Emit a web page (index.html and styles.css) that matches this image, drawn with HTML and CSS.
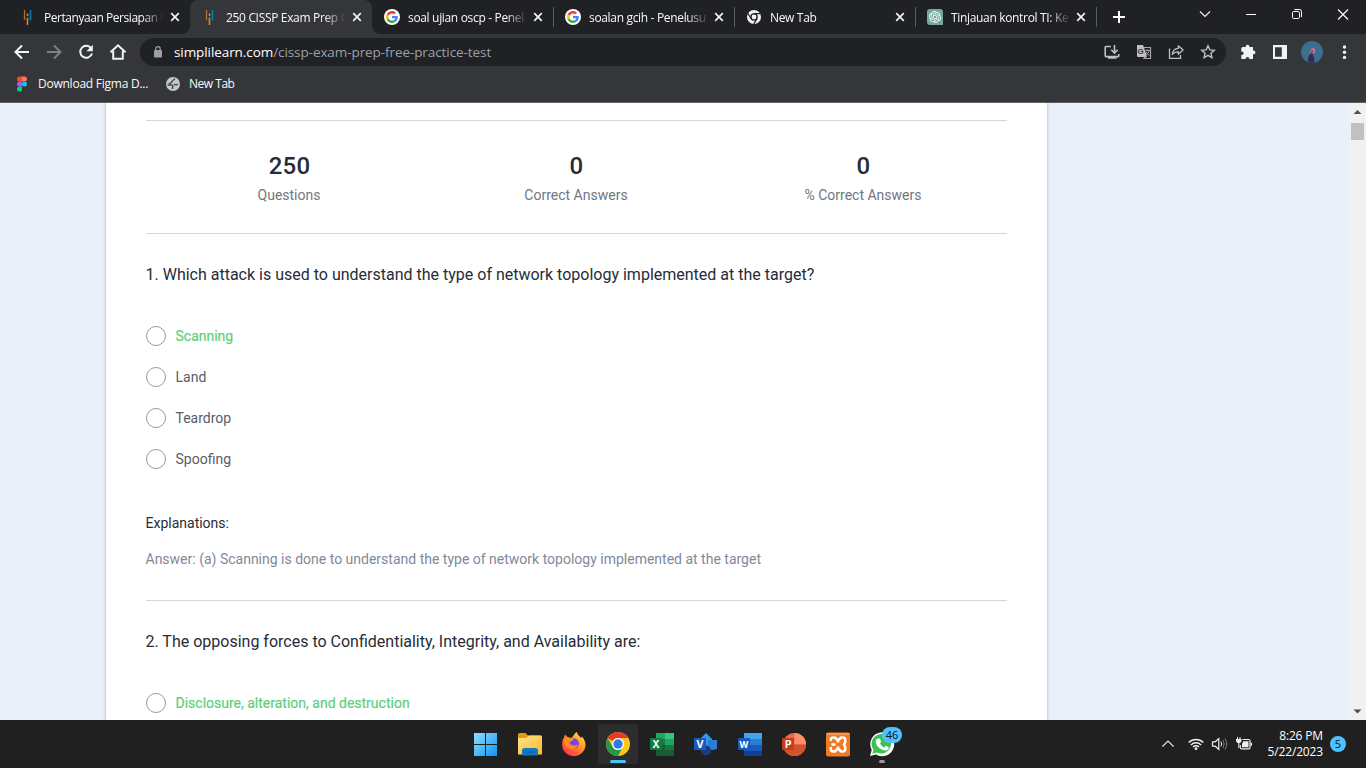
FILE: index.html
```html
<!DOCTYPE html>
<html lang="en">
<head>
<meta charset="utf-8">
<title>250 CISSP Exam Prep</title>
<link rel="stylesheet" href="styles.css">
</head>
<body>
<svg class="defs" width="0" height="0">
  <defs>
    <symbol id="x" viewBox="0 0 10 10"><path d="M1.2 1.2l7.6 7.6M8.800 1.200L1.200 8.800" stroke="#f1f3f4" stroke-width="1.7"/></symbol>
    <symbol id="sl" viewBox="0 0 16 16"><path d="M4.500 1v10" stroke="#a9742b" stroke-width="1.300"/><path d="M7.500 4.500v2.500M7.500 8.500v7.500" stroke="#c98b35" stroke-width="1.600"/><path d="M10.500 1v10.500" stroke="#0a7fa5" stroke-width="1.600"/></symbol>
    <symbol id="g" viewBox="0 0 72 72"><circle cx="36" cy="36" r="36" fill="#fff"/><g transform="translate(9 9) scale(1.125)"><path fill="#EA4335" d="M24 9.500c3.540 0 6.710 1.220 9.210 3.600l6.850-6.850C35.900 2.380 30.470 0 24 0 14.620 0 6.510 5.380 2.560 13.220l7.980 6.190C12.430 13.720 17.740 9.500 24 9.500z"/><path fill="#4285F4" d="M46.980 24.550c0-1.570-.15-3.090-.38-4.550H24v9.020h12.940c-.58 2.960-2.260 5.480-4.780 7.180l7.730 6c4.510-4.180 7.090-10.360 7.090-17.650z"/><path fill="#FBBC05" d="M10.530 28.590c-.48-1.450-.76-2.990-.76-4.590s.27-3.140.76-4.590l-7.980-6.190C.92 16.460 0 20.120 0 24c0 3.880.92 7.540 2.560 10.780z"/><path fill="#34A853" d="M24 48c6.480 0 11.930-2.130 15.890-5.810l-7.730-6c-2.150 1.450-4.920 2.300-8.160 2.300-6.260 0-11.570-4.220-13.470-9.910l-7.980 6.190C6.510 42.620 14.620 48 24 48z"/></g></symbol>
  </defs>
</svg>

<header class="browser">
  <div class="tabstrip">
    <div class="tab first"><svg class="fav"><use href="#sl"/></svg><span class="title">Pertanyaan Persiapan U</span><svg class="close"><use href="#x"/></svg></div>
    <div class="tab active"><svg class="fav"><use href="#sl"/></svg><span class="title">250 CISSP Exam Prep Q</span><svg class="close"><use href="#x"/></svg></div>
    <div class="tab sep"><svg class="fav"><use href="#g"/></svg><span class="title">soal ujian oscp - Penel</span><svg class="close"><use href="#x"/></svg></div>
    <div class="tab sep"><svg class="fav"><use href="#g"/></svg><span class="title">soalan gcih - Penelusu</span><svg class="close"><use href="#x"/></svg></div>
    <div class="tab sep"><svg class="fav" viewBox="0 0 16 16"><circle cx="8" cy="8" r="7" fill="#f1f3f4"/><circle cx="8" cy="8" r="3.100" fill="#f1f3f4" stroke="#202124" stroke-width="1.400"/><path d="M8 4.600h6.500M5 9.500L1.800 4.200M11 9.600l-3.200 5.300" stroke="#202124" stroke-width="1.200"/></svg><span class="title">New Tab</span><svg class="close"><use href="#x"/></svg></div>
    <div class="tab sep"><svg class="fav" viewBox="0 0 16 16"><path d="M3 0h10a3 3 0 0 1 3 3v13H3a3 3 0 0 1-3-3V3a3 3 0 0 1 3-3z" fill="#74aa9c"/><path transform="translate(2 2) scale(.5)" fill="#fff" d="M22.2819 9.8211a5.9847 5.9847 0 0 0-.5157-4.9108 6.0462 6.0462 0 0 0-6.5098-2.9A6.0651 6.0651 0 0 0 4.9807 4.1818a5.9847 5.9847 0 0 0-3.9977 2.9 6.0462 6.0462 0 0 0 .7427 7.0966 5.98 5.98 0 0 0 .511 4.9107 6.051 6.051 0 0 0 6.5146 2.9001A5.9847 5.9847 0 0 0 13.2599 24a6.0557 6.0557 0 0 0 5.7718-4.2058 5.9894 5.9894 0 0 0 3.9977-2.9001 6.0557 6.0557 0 0 0-.7475-7.0729zm-9.022 12.6081a4.4755 4.4755 0 0 1-2.8764-1.0408l.1419-.0804 4.7783-2.7582a.7948.7948 0 0 0 .3927-.6813v-6.7369l2.02 1.1686a.071.071 0 0 1 .038.052v5.5826a4.504 4.504 0 0 1-4.4945 4.4944zm-9.6607-4.1254a4.4708 4.4708 0 0 1-.5346-3.0137l.142.0852 4.783 2.7582a.7712.7712 0 0 0 .7806 0l5.8428-3.3685v2.3324a.0804.0804 0 0 1-.0332.0615L9.74 19.9502a4.4992 4.4992 0 0 1-6.1408-1.6464zM2.3408 7.8956a4.485 4.485 0 0 1 2.3655-1.9728V11.6a.7664.7664 0 0 0 .3879.6765l5.8144 3.3543-2.0201 1.1685a.0757.0757 0 0 1-.071 0l-4.8303-2.7865A4.504 4.504 0 0 1 2.3408 7.872zm16.5963 3.8558L13.1038 8.364 15.1192 7.2a.0757.0757 0 0 1 .071 0l4.8303 2.7913a4.4944 4.4944 0 0 1-.6765 8.1042v-5.6772a.79.79 0 0 0-.407-.667zm2.0107-3.0231l-.142-.0852-4.7735-2.7818a.7759.7759 0 0 0-.7854 0L9.409 9.2297V6.8974a.0662.0662 0 0 1 .0284-.0615l4.8303-2.7866a4.4992 4.4992 0 0 1 6.6802 4.66zM8.3065 12.863l-2.02-1.1638a.0804.0804 0 0 1-.038-.0567V6.0742a4.4992 4.4992 0 0 1 7.3757-3.4537l-.142.0805L8.704 5.459a.7948.7948 0 0 0-.3927.6813zm1.0976-2.3654l2.602-1.4998 2.6069 1.4998v2.9994l-2.5974 1.4997-2.6067-1.4997Z"/></svg><span class="title">Tinjauan kontrol TI: Ke</span><svg class="close"><use href="#x"/></svg></div>
    <svg class="plus" viewBox="0 0 12 12"><path d="M6 0v12M0 6h12" stroke="#fff" stroke-width="2"/></svg>
    <div class="winctl">
      <svg viewBox="0 0 46 28"><path d="M18 11.500l5 5 5-5" fill="none" stroke="#eee" stroke-width="1.200"/></svg>
      <svg viewBox="0 0 46 28"><path d="M18 14.500h10" stroke="#fff"/></svg>
      <svg viewBox="0 0 46 28"><rect x="18.500" y="11.500" width="7" height="7" rx="1.200" fill="none" stroke="#fff"/><path d="M20.500 9.500h5a2 2 0 0 1 2 2v5.500" fill="none" stroke="#fff"/></svg>
      <svg viewBox="0 0 46 28"><path d="M18 9.500l10 10M28 9.500l-10 10" stroke="#fff" stroke-width="1.100"/></svg>
    </div>
  </div>

  <div class="toolbar">
    <svg class="tb" viewBox="0 0 32 32"><path d="M23 16H10M16 9.500L9.500 16l6.500 6.500" fill="none" stroke="#f1f3f4" stroke-width="2"/></svg>
    <svg class="tb" viewBox="0 0 32 32"><path d="M9 16h13M16 9.500l6.500 6.500-6.500 6.500" fill="none" stroke="#7d7f82" stroke-width="2"/></svg>
    <svg class="tb" viewBox="0 0 32 32"><path d="M21.300 12.500A6 6 0 1 0 22 17.500" fill="none" stroke="#f1f3f4" stroke-width="2"/><path d="M22.800 8.800v6.400h-6.400z" fill="#f1f3f4"/></svg>
    <svg class="tb" viewBox="0 0 32 32"><path d="M8.500 16.300L16 9.300l7.500 7" fill="none" stroke="#f1f3f4" stroke-width="2"/><path d="M11.200 15v7.800h9.600V15" fill="none" stroke="#f1f3f4" stroke-width="2"/></svg>
    <div class="omnibox">
      <svg class="lock" viewBox="0 0 10 12"><rect x="1" y="4" width="8" height="7.500" rx="1" fill="#9aa0a6"/><path d="M2.800 4.500V2.900a2.200 2.200 0 0 1 4.400 0v1.600" fill="none" stroke="#9aa0a6" stroke-width="1.200"/></svg>
      <span class="url"><b>simplilearn.com</b>/cissp-exam-prep-free-practice-test</span>
      <svg class="tb" viewBox="0 0 32 32"><path d="M15 10.500h-5a.8.800 0 0 0-.8.800v8.500a.8.800 0 0 0 .8.800h12a.8.800 0 0 0 .8-.8V18M12 22h8.500M18.500 9v8M15.300 13.800l3.200 3.200 3.200-3.200" fill="none" stroke="#bdc1c6" stroke-width="1.600"/></svg>
      <svg class="tb" viewBox="0 0 32 32"><path d="M9 9h6l1 2.500 3 9.500h-9a1 1 0 0 1-1-1z" fill="#bdc1c6"/><path d="M16 11.500h6.500v11H16l2.500-2.500" fill="none" stroke="#a4a7aa" stroke-width="1.200"/><text x="9.600" y="17.800" class="tg">G</text><path d="M17.300 14.500h4.500M19.400 13.300v1M21 14.800c-.6 2-1.700 3.300-2.800 4.200M18 15.800c.7 1.600 1.800 2.800 3.400 3.600" fill="none" stroke="#a4a7aa"/></svg>
      <svg class="tb" viewBox="0 0 32 32"><path d="M9.500 12.500v9.800h11v-3.300" fill="none" stroke="#bdc1c6" stroke-width="1.300"/><path d="M18.300 9.800l4.800 4.200-4.800 4.200v-2.400c-2.600 0-4.700.7-6 2.700.3-3.400 2.300-5.900 6-6.200z" fill="none" stroke="#bdc1c6" stroke-width="1.300" stroke-linejoin="round"/></svg>
      <svg class="tb" viewBox="0 0 32 32"><path d="M16 9.800l1.850 4.100 4.450.4-3.350 3 1 4.400L16 19.400l-3.950 2.300 1-4.400-3.350-3 4.450-.4z" fill="none" stroke="#bdc1c6" stroke-width="1.400"/></svg>
    </div>
    <svg class="tb" viewBox="0 0 32 32"><path d="M10.500 11h3.300v-.5a1.800 1.800 0 0 1 3.600 0v.5H21v3.500h.5a1.900 1.900 0 0 1 0 3.800H21V23h-3.800v-1a1.900 1.900 0 0 0-3.400 0v1H9.300v-4h.6a1.800 1.800 0 0 0 0-3.600h-.6V12z" fill="#f1f3f4"/></svg>
    <svg class="tb" viewBox="0 0 32 32"><path d="M9 9h14v14H9zM11 11.200v9.600h6.800v-9.600z" fill="#f1f3f4" fill-rule="evenodd"/></svg>
    <svg class="tb" viewBox="0 0 32 32"><circle cx="16" cy="16" r="11" fill="#3a708e"/><path d="M11.500 25.500l1.500-6 3-2.500 2 4.500.5 5a11 11 0 0 1-7-1z" fill="#342c50"/><path d="M13.200 17l1.800-3.500 2.500-2 1.800 2.300-1 4.200-2.300-1.500z" fill="#c96c9c"/><path d="M14 16.500l2.300-2.500 1 2z" fill="#783651"/></svg>
    <svg class="tb" viewBox="0 0 32 32"><g fill="#f1f3f4"><circle cx="16.500" cy="11" r="1.700"/><circle cx="16.500" cy="16.200" r="1.700"/><circle cx="16.500" cy="21.400" r="1.700"/></g></svg>
  </div>

  <div class="bookmarks">
    <svg class="bm" viewBox="0 0 16 16"><path d="M8 .5H5.500a2.500 2.500 0 0 0 0 5H8z" fill="#f24e1e"/><path d="M8 .5h2.500a2.500 2.500 0 0 1 0 5H8z" fill="#ff7262"/><path d="M8 5.500H5.500a2.500 2.500 0 0 0 0 5H8z" fill="#a259ff"/><circle cx="10.500" cy="8" r="2.500" fill="#1abcfe"/><path d="M8 10.500H5.500A2.500 2.500 0 1 0 8 13z" fill="#0acf83"/></svg>
    <span class="bmt first">Download Figma D...</span>
    <svg class="bm" viewBox="0 0 16 16"><circle cx="8" cy="8" r="7" fill="#c4c7cb"/><path d="M9.500 2.500c.5 2-2.500 1.200-2.500 3S4.500 6.500 4 8M2.500 9h3.500c1.500 0 2.500 1 1.500 2.500V13M9 8c1 1 2.500 1 4 0" fill="none" stroke="#46474b" stroke-width="1.500" stroke-linejoin="round"/></svg>
    <span class="bmt">New Tab</span>
  </div>
</header>

<main class="viewport">
  <section class="card">
    <div class="stats">
      <div><strong>250</strong><span>Questions</span></div>
      <div><strong>0</strong><span>Correct Answers</span></div>
      <div><strong>0</strong><span>% Correct Answers</span></div>
    </div>
    <article class="question">
      <h2>1. Which attack is used to understand the type of network topology implemented at the target?</h2>
      <ul>
        <li class="right">Scanning</li>
        <li>Land</li>
        <li>Teardrop</li>
        <li>Spoofing</li>
      </ul>
      <h3>Explanations:</h3>
      <p>Answer: (a) Scanning is done to understand the type of network topology implemented at the target</p>
    </article>
    <article class="question">
      <h2>2. The opposing forces to Confidentiality, Integrity, and Availability are:</h2>
      <ul>
        <li class="right">Disclosure, alteration, and destruction</li>
      </ul>
    </article>
  </section>
  <div class="scrollbar">
    <svg viewBox="0 0 17 17"><path d="M4.500 11l4-4 4 4z" fill="#505050"/></svg>
    <div class="thumb"></div>
    <svg class="down" viewBox="0 0 17 17"><path d="M4.500 6.500l4 4 4-4z" fill="#505050"/></svg>
  </div>
</main>

<footer class="taskbar">
  <nav class="apps">
    <svg viewBox="0 0 44 48"><defs><linearGradient id="w" x2="1" y2="1"><stop stop-color="#8fe0ff"/><stop offset="1" stop-color="#0b95f5"/></linearGradient></defs><path d="M10 13h11v11H10zM22 13h11v11H22zM10 25h11v11H10zM22 25h11v11H22z" fill="url(#w)"/></svg>
    <svg viewBox="0 0 44 48"><defs><linearGradient id="f" x2="1" y2="1"><stop stop-color="#ffe18a"/><stop offset="1" stop-color="#fbbc25"/></linearGradient></defs><path d="M10 14.500a1.500 1.500 0 0 1 1.500-1.500h6l2.500 2.500h12.500A1.500 1.500 0 0 1 34 17v5H10z" fill="#dd9d0e"/><path d="M10 18h8l3-2.500h11.500A1.500 1.500 0 0 1 34 17v17.500H10z" fill="url(#f)"/><path d="M14 35.500v-5a2.500 2.500 0 0 1 2.500-2.500h11a2.500 2.500 0 0 1 2.500 2.500v5z" fill="#1177c7"/><path d="M18 32h8" stroke="#075796"/></svg>
    <svg viewBox="0 0 44 48"><defs><linearGradient id="ff" x1="1" x2=".2" y2="1"><stop stop-color="#fff36b"/><stop offset=".45" stop-color="#ff9a20"/><stop offset="1" stop-color="#ff294f"/></linearGradient></defs><path d="M12 17.500l1-3 2.500 2.500 4 1 2-2.500c.8-1.500 2-3 3.500-3.500 0 3 2.500 3.500 4 6l1-1.500c2 3 3.500 5 3.500 8a11.700 11.700 0 0 1-23.400 0c0-2.500.5-5 1.900-7z" fill="url(#ff)"/><circle cx="22" cy="23.500" r="5" fill="#7a45db"/><path d="M12.500 18.500c3-1.500 6.500-.5 9 1-1 2-3 1.500-4 3 1 3.500 5 4 8.500 1.500-1 4-5 6-8.500 4.500-4.500-.5-6-6-5-10z" fill="#ff8a1d"/></svg>
    <svg class="on" viewBox="0 0 44 48"><circle cx="22" cy="24" r="12" fill="#fbc719"/><path d="M11.600 18A12 12 0 0 1 32.400 18H22a6 6 0 0 0-5.200 3z" fill="#e33b2e"/><path d="M11.600 18l5.200 9a6 6 0 0 0 9.200 1.500L22 36A12 12 0 0 1 11.600 18z" fill="#279847"/><circle cx="22" cy="24" r="6" fill="#fff"/><circle cx="22" cy="24" r="4.700" fill="#3478e8"/><rect x="14" y="40" width="16" height="3" rx="1.500" fill="#4cc2ff"/></svg>
    <svg viewBox="0 0 44 48"><path d="M16 13h9v23h-9z" fill="#21a366"/><path d="M25 13h9v6h-9z" fill="#33c481"/><path d="M16 19h9v6h-9z" fill="#107c41"/><path d="M25 19h9v6h-9z" fill="#21a366"/><path d="M16 25h18v11H16z" fill="#185c37"/><path d="M25 25h9v5h-9z" fill="#107c41"/><rect x="10" y="18" width="12" height="12" rx="1" fill="#107c41"/><text x="16" y="28" class="app">X</text></svg>
    <svg viewBox="0 0 44 48"><path d="M15 20l7-7 6 6v10l-6 6-7-7z" fill="#3498e8"/><path d="M24 20h9v9l-5 1-4-3z" fill="#2b7cd3"/><circle cx="22" cy="30.500" r="5" fill="#173c83"/><rect x="10" y="18" width="12" height="12" rx="1" fill="#185abd"/><text x="16" y="28" class="app">V</text></svg>
    <svg viewBox="0 0 44 48"><path d="M16 13h18v6H16z" fill="#41a5ee"/><path d="M16 19h18v6H16z" fill="#2b7cd3"/><path d="M16 25h18v6H16z" fill="#185abd"/><path d="M16 31h18v5H16z" fill="#103f91"/><rect x="10" y="18" width="12" height="12" rx="1" fill="#185abd"/><text x="16" y="28" class="app w">W</text></svg>
    <svg viewBox="0 0 44 48"><circle cx="22.500" cy="24.500" r="11.500" fill="#ed6c47"/><path d="M22.500 13A11.500 11.500 0 0 1 34 24.500H22.500z" fill="#ff8f6b"/><path d="M11 24.500h23a11.500 11.500 0 0 1-23 0z" fill="#d35230"/><rect x="10" y="18" width="12" height="12" rx="1" fill="#c43e1c"/><text x="16.200" y="28" class="app">P</text></svg>
    <svg viewBox="0 0 44 48"><rect x="10" y="12.500" width="24" height="24" rx="2" fill="#f07a25"/><path d="M10.500 14h23" stroke="#ffb06c"/><path d="M14.800 21v-1a2.500 2.500 0 0 1 2.500-2.500h1.500l3.200 3 3.200-3h1.500a2.500 2.500 0 0 1 2.500 2.500v2l-1.200 2.500 1.200 2.500v2a2.500 2.500 0 0 1-2.500 2.500h-1.500l-3.200-3-3.200 3h-1.500a2.500 2.500 0 0 1-2.500-2.500v-2M15.500 24.500h4M22 20.500v2M22 28.500v-2" fill="none" stroke="#fff" stroke-width="2.500" stroke-linejoin="round"/></svg>
    <svg viewBox="0 0 44 48"><path d="M10 36l1.700-6A12 12 0 1 1 16 34.500z" fill="#fff"/><path d="M12.300 33.800l1.200-4.200A9.700 9.700 0 1 1 17 32.500z" fill="#3ac351"/><path d="M18 18.500l2 .2 1.200 3-1.200 1.700c1 2 2.400 3.200 4.200 4l1.600-1.700 3 1.500c.2 2.500-2 3.500-4 3.200-5-.8-9-5-9-8.700 0-1.500 1-3 2.200-3.200z" fill="#fff"/><rect x="22" y="7" width="20" height="16" rx="8" fill="#4cc2ff"/><text x="32" y="19" class="count">46</text><rect x="19" y="40" width="6" height="3" rx="1.500" fill="#9a9a9a"/></svg>
  </nav>
  <div class="tray">
    <svg width="16" height="16" viewBox="0 0 16 16"><path d="M2.300 10.700L8 5l5.700 5.700" fill="none" stroke="#eee" stroke-width="1.200"/></svg>
    <svg class="wifi" width="16" height="16" viewBox="0 0 16 16"><g fill="none" stroke="#eee" stroke-width="1.400"><path d="M.7 6.600a10.300 10.300 0 0 1 14.600 0M2.900 8.900a7.200 7.200 0 0 1 10.200 0M5 11a4.200 4.200 0 0 1 6 0"/></g><circle cx="8" cy="12.700" r="1.400" fill="#eee"/></svg>
    <svg class="snd" width="17" height="16" viewBox="0 0 17 16"><path d="M1.500 5.800h2.700l3.600-3.300v11L4.200 10.200H1.500z" fill="none" stroke="#eee" stroke-width="1.200"/><path d="M10 5.700q1.400 2.300 0 4.600" fill="none" stroke="#eee"/><path d="M12 4q2.500 4 0 8M14 2.500q3.500 5.500 0 11" fill="none" stroke="#777"/></svg>
    <svg class="bat" width="17" height="16" viewBox="0 0 17 16"><path d="M6.500 3.500h6a1.500 1.500 0 0 1 1.500 1.500v6.500a1.300 1.300 0 0 1-1.300 1.300H5.600a1.300 1.300 0 0 1-1.300-1.300V9" fill="none" stroke="#eee" stroke-width="1.200"/><path d="M7 5.200h5.500v6H6V7.500l1-1z" fill="#eee"/><path d="M14.500 6.800H16v3h-1.500zM0 3h5.500v2.500L4 7H1.500L0 5.500zM1 1h1v2H1zM3.500 1h1v2h-1zM2.300 7h1v5h-1z" fill="#eee"/></svg>
    <div class="clock"><span>8:26 PM</span><span>5/22/2023</span></div>
    <span class="notif">5</span>
  </div>
</footer>
</body>
</html>
```

FILE: styles.css
```css
*, *::before, *::after { box-sizing: border-box; }
body {
  margin: 0;
  width: 1366px;
  height: 768px;
  overflow: hidden;
  display: flex;
  flex-direction: column;
  font-family: Roboto, "Liberation Sans", sans-serif;
}
svg { display: block; flex: none; }
.defs { position: absolute; }

.browser {
  height: 103px;
  flex: none;
  background: #35363a;
  border-bottom: 1px solid #5c5e62;
  font: 12px "Open Sans", "Noto Sans", sans-serif;
  color: #f8f9fa;
}
.tabstrip {
  height: 34px;
  display: flex;
  padding-left: 9px;
  background: #202124;
}
.tab {
  width: 181px;
  height: 34px;
  flex: none;
  display: flex;
  align-items: center;
  padding-left: 12px;
  position: relative;
}
.tab.first { padding-left: 11px; }
.tab.active { width: 182px; background: #35363a; border-radius: 8px 8px 0 0; }
.tab.active::before, .tab.active::after {
  content: "";
  position: absolute;
  bottom: 0;
  width: 8px;
  height: 8px;
  z-index: 1;
}
.tab.active::before { left: -8px; background: radial-gradient(circle at 0 0, transparent 7.500px, #35363a 8px); }
.tab.active::after { right: -8px; background: radial-gradient(circle at 100% 0, transparent 7.500px, #35363a 8px); }
.tab.sep::after {
  content: "";
  position: absolute;
  right: -1px;
  top: 7px;
  width: 1px;
  height: 20px;
  background: #5a5c60;
}
.fav { width: 16px; height: 16px; }
.title {
  width: 118px;
  margin-left: 8px;
  white-space: nowrap;
  letter-spacing: -0.33px;
  -webkit-mask-image: linear-gradient(90deg, #000 98px, transparent 120px);
  mask-image: linear-gradient(90deg, #000 98px, transparent 120px);
}
.first .title { letter-spacing: -0.45px; }
.close { width: 10px; height: 10px; margin-left: 7px; }
.first .close { margin-left: 8px; }
.active .close { margin-left: 8px; }
.plus { width: 12px; height: 12px; margin: 11px 0 0 17px; }
.winctl { margin-left: auto; display: flex; }
.winctl svg { width: 46px; height: 28px; }

.toolbar {
  height: 36px;
  display: flex;
  align-items: center;
  padding-left: 6px;
}
.tb { width: 32px; height: 32px; }
.omnibox {
  width: 1086px;
  height: 28px;
  margin: 0 6px;
  padding: 0 2px 0 13px;
  display: flex;
  align-items: center;
  border-radius: 14px;
  background: #202124;
}
.lock { width: 10px; height: 12px; }
.url {
  flex: 1;
  margin-left: 11px;
  font-size: 13.500px;
  letter-spacing: -0.08px;
  color: #9aa0a6;
  white-space: nowrap;
}
.url b { font-weight: 400; color: #fff; }
.tg { font: bold 8px "Liberation Sans", sans-serif; fill: #35363a; }

.bookmarks {
  height: 28px;
  display: flex;
  align-items: center;
  padding-left: 14px;
}
.bm { width: 16px; height: 16px; }
.bmt { margin: -1px 0 0 8px; letter-spacing: -0.48px; white-space: nowrap; }
.bmt.first { width: 127px; letter-spacing: -0.24px; }

.viewport {
  height: 617px;
  flex: none;
  display: flex;
  justify-content: space-between;
  padding-left: 106px;
  overflow: hidden;
  background: #e9f0f9;
}
.card {
  width: 941px;
  padding: 17px 40px 0;
  background: #fff;
  box-shadow: 0 0 3px rgba(50, 60, 90, .4);
}
.stats {
  height: 114px;
  display: grid;
  grid-template-columns: repeat(3, 1fr);
  border-top: 1px solid #d4d5d8;
  border-bottom: 1px solid #d4d5d8;
  text-align: center;
}
.stats div { display: flex; flex-direction: column; padding-right: 1px; }
.stats strong {
  margin-top: 31px;
  padding-left: 1px;
  font-size: 24px;
  line-height: 28px;
  font-weight: 500;
  letter-spacing: .2px;
  color: #272c37;
}
.stats span { margin-top: 7px; font-size: 14px; line-height: 16px; color: #6f7780; }
.question { height: 367px; border-bottom: 1px solid #d4d5d8; padding-top: 29px; }
.question h2 {
  margin: 0 0 39px -0.5px;
  font-size: 16px;
  line-height: 24px;
  font-weight: 400;
  color: #272c37;
}
.question ul { margin: 0; padding: 0; list-style: none; }
.question li {
  height: 20px;
  margin-bottom: 21px;
  display: flex;
  align-items: center;
  gap: 9.500px;
  font-size: 14px;
  color: #5a5d68;
}
.question li::before {
  content: "";
  width: 20px;
  height: 20px;
  border: 1px solid #999;
  border-radius: 50%;
}
.question li.right { color: #5fcf80; -webkit-text-stroke: .2px #5fcf80; }
.question h3 {
  margin: 44px 0 16px -0.5px;
  font-size: 14px;
  line-height: 20px;
  font-weight: 400;
  color: #272c37;
}
.question p { margin: 0 0 0 -0.5px; font-size: 14px; line-height: 20px; color: #818999; }
.scrollbar {
  width: 17px;
  background: #f1f1f1;
  display: flex;
  flex-direction: column;
}
.scrollbar svg { width: 17px; height: 17px; }
.thumb { width: 13px; height: 17px; margin: 3px 2px 0; background: #c1c1c1; }
.scrollbar .down { margin-top: auto; }

.taskbar {
  height: 48px;
  flex: none;
  display: flex;
  padding-left: 464px;
  background: #202020;
}
.apps { display: flex; }
.apps svg { width: 44px; height: 48px; }
.apps .on { background: linear-gradient(#2d2d2d, #2d2d2d) 2px 4px / 40px 40px no-repeat; }
.app { font: bold 10px Inter, sans-serif; fill: #fff; text-anchor: middle; }
.app.w { font-size: 9px; }
.count { font: 11px "Open Sans", sans-serif; fill: #111; text-anchor: middle; }
.tray {
  margin-left: auto;
  padding-right: 20px;
  display: flex;
  align-items: center;
}
.wifi { margin-left: 12px; }
.snd { margin-left: 7px; }
.bat { margin-left: 8px; }
.clock {
  width: 70px;
  display: flex;
  flex-direction: column;
  text-align: right;
  font: 12px/16px "Open Sans", sans-serif;
  letter-spacing: -0.15px;
  color: #fff;
}
.notif {
  width: 16px;
  height: 16px;
  margin-left: 7px;
  border-radius: 50%;
  background: #4cc2ff;
  color: #111;
  font: 11px/16px "Open Sans", sans-serif;
  text-align: center;
}
```
